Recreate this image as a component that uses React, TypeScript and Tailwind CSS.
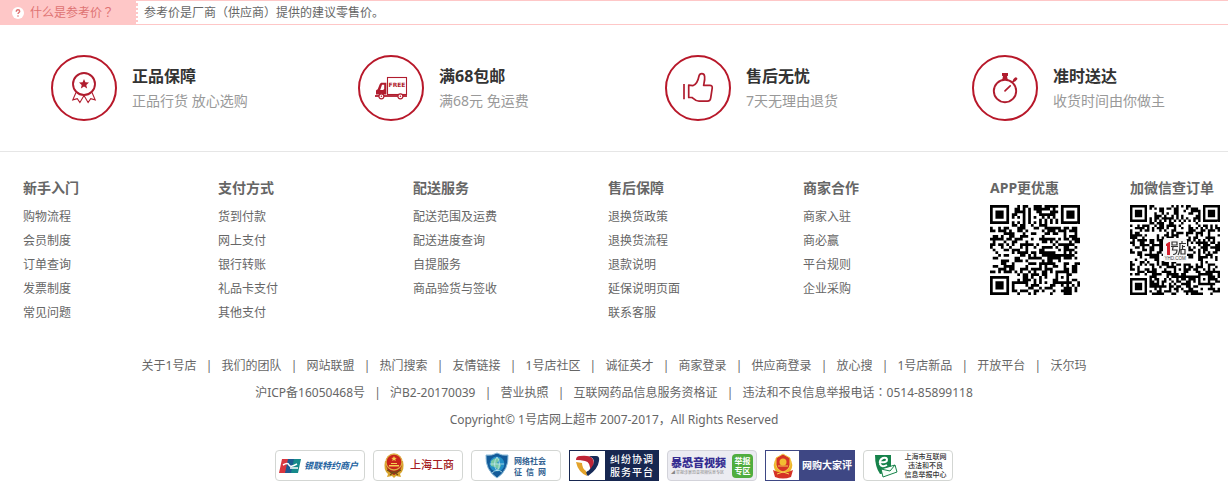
import React from "react";

const features = [
  { title: "正品保障", text: "正品行货 放心选购", icon: "medal" },
  { title: "满68包邮", text: "满68元 免运费", icon: "truck" },
  { title: "售后无忧", text: "7天无理由退货", icon: "thumb" },
  { title: "准时送达", text: "收货时间由你做主", icon: "watch" },
];

const columns = [
  { title: "新手入门", items: ["购物流程", "会员制度", "订单查询", "发票制度", "常见问题"] },
  { title: "支付方式", items: ["货到付款", "网上支付", "银行转账", "礼品卡支付", "其他支付"] },
  { title: "配送服务", items: ["配送范围及运费", "配送进度查询", "自提服务", "商品验货与签收"] },
  { title: "售后保障", items: ["退换货政策", "退换货流程", "退款说明", "延保说明页面", "联系客服"] },
  { title: "商家合作", items: ["商家入驻", "商必赢", "平台规则", "企业采购"] },
];

const siteLinks = [
  "关于1号店", "我们的团队", "网站联盟", "热门搜索", "友情链接", "1号店社区", "诚征英才",
  "商家登录", "供应商登录", "放心搜", "1号店新品", "开放平台", "沃尔玛",
];

const legalLinks = [
  "沪ICP备16050468号", "沪B2-20170039", "营业执照", "互联网药品信息服务资格证",
  "违法和不良信息举报电话：0514-85899118",
];

function FeatureIcon({ name }: { name: string }) {
  return (
    <svg viewBox="0 0 66 66" className="size-[66px] shrink-0" fill="none" stroke="#b01c2e" strokeWidth="1.7" aria-hidden="true">
      <circle cx="33" cy="33" r="32" stroke="#b8182a" strokeWidth="2" />
      {name === "medal" && (
        <g>
          <circle cx="33" cy="29" r="11" strokeWidth="1.9" />
          <path d="M33 24l1.4 3.3 3.6.3-2.7 2.4.8 3.5-3.1-1.9-3.1 1.9.8-3.5-2.7-2.4 3.6-.3z" fill="#b01c2e" stroke="none" />
          <path d="M25 37.5l-3.2 7.3 4.5-1.2 2.6 3.9 4.1-7 4.1 7 2.6-3.9 4.5 1.2-3.2-7.3" strokeWidth="1.1" />
        </g>
      )}
      {name === "truck" && (
        <g>
          <rect x="29.5" y="22.5" width="19" height="17" strokeWidth="1.1" />
          <path d="M28.400 27.700H24c-1.200 0-1.900.6-2.300 1.600l-2 5c-1.200.5-1.700 1-1.700 2V39.500H28.400z" fill="#b01c2e" stroke="none" />
          <path d="M26.200 29.700h-2.200l-1.800 5.200h3l1-1.200z" fill="#fff" stroke="none" />
          <path d="M17 41H49" strokeWidth="1.8" />
          <circle cx="23.4" cy="41.3" r="2.500" fill="#fff" strokeWidth="1.2" />
          <circle cx="42.4" cy="41.3" r="2.500" fill="#fff" strokeWidth="1.2" />
          <circle cx="23.4" cy="41.3" r=".8" fill="#b01c2e" stroke="none" />
          <circle cx="42.4" cy="41.3" r=".8" fill="#b01c2e" stroke="none" />
          <text x="39" y="32" textAnchor="middle" fill="#b01c2e" stroke="none" fontSize="6" fontWeight="700" fontFamily="DejaVu Sans, sans-serif">FREE</text>
        </g>
      )}
      {name === "thumb" && (
        <path d="M19 29V44.3M23.7 30.2V42.5H27c2 1.8 3.8 3.7 7 3.7h8.5c2.5 0 3-1.2 3.2-3.2l1.5-9.8c.3-2-.6-2.9-2.4-2.9h-6.2c.6-3 1.5-5.8 1-9-.6-3.5-4.9-3.3-5.6-.3-.8 4.2-2.2 8.5-6.2 9.7z" strokeLinejoin="round" />
      )}
      {name === "watch" && (
        <g>
          <circle cx="33" cy="36" r="11.2" strokeWidth="1.9" />
          <path d="M30 18h6v2.7l-1 .6.8 3.5h-5.6l.8-3.5-1-.6z" fill="#b01c2e" stroke="none" />
          <path d="M33 35.8l5.2-5M41 26.6l1.2-1.2" strokeLinecap="round" />
          <path d="M42.6 25l1.2-1.2" strokeWidth="3" strokeLinecap="round" />
        </g>
      )}
    </svg>
  );
}

function finderModule(x: number, y: number) {
  const ring = Math.max(Math.abs(x - 3), Math.abs(y - 3));
  return ring === 3 || ring <= 1;
}

function moduleIsDark(x: number, y: number, n: number, seed: number) {
  if (x < 8 && y < 8) return finderModule(x, y);
  if (x > n - 9 && y < 8) return finderModule(n - 1 - x, y);
  if (x < 8 && y > n - 9) return finderModule(x, n - 1 - y);
  const ring = Math.max(Math.abs(x - (n - 7)), Math.abs(y - (n - 7)));
  if (ring <= 2) return ring !== 1;
  if (x === 6) return y % 2 === 0;
  if (y === 6) return x % 2 === 0;
  let h = (x * 374761393 + y * 668265263 + seed * 69069) | 0;
  h = Math.imul(h ^ (h >>> 13), 1274126177);
  return ((h ^ (h >>> 16)) & 255) < 132;
}

function QrCode({ size, seed, label, logo = false }: { size: number; seed: number; label: string; logo?: boolean }) {
  let d = "";
  for (let y = 0; y < size; y++) {
    for (let x = 0; x < size; x++) {
      if (moduleIsDark(x, y, size, seed)) d += `M${x} ${y}h1v1h-1z`;
    }
  }
  return (
    <div className="relative size-[90px]">
      <svg viewBox={`0 0 ${size} ${size}`} className="size-full" role="img" aria-label={label}>
        <path d={d} fill="#000" />
      </svg>
      {logo && (
        <svg viewBox="0 0 24 24" className="absolute inset-0 m-auto size-[24px]" aria-hidden="true">
          <rect width="24" height="24" rx="3" fill="#f7f7f7" />
          <path d="M3 6l3-2h1v13H4V8H3z" fill="#d5202c" />
          <path d="M9 4h5v3H9zM8 8.5h7M10 9l-.5 3H14c0 3-1 4.500-4 4.500M19 3v2M16 5.500h7M17 6c0 5 0 8-2 11M19.500 7v4M19.500 8.500H22M18 11.500h4V16h-4z" fill="none" stroke="#333" strokeWidth="1.200" />
          <text x="12" y="22" textAnchor="middle" fontSize="4.500" fill="#444" fontFamily="Liberation Sans, sans-serif">YHD.COM</text>
        </svg>
      )}
    </div>
  );
}

function CenteredMark({ children }: { children: string }) {
  return <span lang="zh-TW" className="font-['Noto_Sans_CJK_TC',sans-serif]">{children}</span>;
}

function LinkText({ text }: { text: string }) {
  const [before, after] = text.split("：");
  if (after === undefined) return <>{text}</>;
  return <>{before}<CenteredMark>：</CenteredMark>{after}</>;
}

function LinkRow({ links }: { links: string[] }) {
  return (
    <div className="flex h-[27px] items-center justify-center whitespace-nowrap">
      {links.map((link, i) => (
        <React.Fragment key={link}>
          {i > 0 && <span className="w-[25px] text-center text-[#666]">|</span>}
          <a href="#" className="hover:underline"><LinkText text={link} /></a>
        </React.Fragment>
      ))}
    </div>
  );
}

function Emblem() {
  return (
    <svg viewBox="0 0 24 26" className="h-[26px] w-[24px] shrink-0" aria-hidden="true">
      <path d="M3 8Q1 17 6 21l-1 3 5-1 2 2 2-2 5 1-1-3q5-4 3-13z" fill="#d9a52d" />
      <path d="M4 9Q4 19 12 22 20 19 20 9z" fill="#ad2118" />
      <circle cx="12" cy="9" r="8" fill="#c9231b" stroke="#ddb044" strokeWidth="1.300" />
      <path d="M12 3l.8 1.800 2 .1-1.500 1.200.5 1.900-1.800-1-1.800 1 .5-1.900-1.500-1.200 2-.1zM7 12h10v1.500H7zM9 10h6v1H9z" fill="#f5cf51" />
      <path d="M5 17q7 5 14 0M8 22l4-3 4 3" fill="none" stroke="#705017" strokeWidth="1.300" />
    </svg>
  );
}

const badgeBase = "flex h-[31px] w-[90px] items-center overflow-hidden whitespace-nowrap border";

function Badges() {
  return (
    <div className="flex justify-center gap-2">
      <a href="#" className={`${badgeBase} rounded-[4px] border-[#d3d6d3] bg-white pl-[2px]`}>
        <svg viewBox="0 0 24 16" className="h-[16px] w-[24px] shrink-0" aria-hidden="true">
          <path d="M4 1h8L9 15H1z" fill="#d9363f" />
          <path d="M10 1h7l-3 14H7z" fill="#1d5b91" />
          <path d="M16 1h7l-3 14h-7z" fill="#168a8b" />
          <path d="M5 7q5-3 6 0t8-1M12 10h8" fill="none" stroke="#fff" strokeWidth="1.500" />
        </svg>
        <span className="pl-[2px] text-[9px] font-bold italic text-[#21619e]">银联特约商户</span>
      </a>
      <a href="#" className={`${badgeBase} rounded-[4px] border-[#d3d6d3] bg-white pl-2`}>
        <Emblem />
        <span className="pl-1 text-[11px] font-medium text-[#a51c23]">上海工商</span>
      </a>
      <a href="#" className={`${badgeBase} rounded-[4px] border-[#d3d6d3] bg-white pl-3`}>
        <svg viewBox="0 0 26 27" className="h-[27px] w-[26px] shrink-0" aria-hidden="true">
          <path d="M13 1q5 3 11 2 1 15-11 23Q1 18 2 3q6 1 11-2z" fill="#145b99" stroke="#8bbbd8" />
          <circle cx="13" cy="12" r="7.500" fill="#238fc6" />
          <path d="M7 9q5-5 9-2l-3 4 4 2-2 5-4-3-4-1z" fill="#78c8a5" />
          <path d="M6 12h14M13 5q-5 7 0 14 5-7 0-14M8 21q5-5 10-1" fill="none" stroke="#bee6ed" strokeWidth=".8" />
        </svg>
        <span className="flex flex-col pl-[4px] text-[8px] leading-[11px] font-bold text-[#315f91]">
          <span>网络社会</span>
          <span className="flex justify-between"><span>征</span><span>信</span><span>网</span></span>
        </span>
      </a>
      <a href="#" className={`${badgeBase} border-[#172750] bg-[#172750]`}>
        <svg viewBox="0 0 35 29" className="h-[29px] w-[35px] shrink-0" aria-hidden="true">
          <path d="M0 0h35v29H0z" fill="#fff" />
          <path d="M6 9q0-4 4-4 9-1 12 2 3 3 1 9l-3 5q1-10-5-11-4-1-9-1z" fill="#bf2536" />
          <path d="M19 5h7q4 0 3 5-1 8-11 15l-3-3q8-5 9-11 0-4-5-6z" fill="#182b58" />
          <path d="M6 11l6 1q0 5 4 8l1 5q-9-4-11-14z" fill="#e3a32b" />
          <path d="M6 10q11-1 12 10" fill="none" stroke="#fff" strokeWidth="1" />
        </svg>
        <span className="flex flex-col pl-[5px] text-[10px] leading-[13px] font-medium text-white">
          {["纠纷协调", "服务平台"].map((line) => (
            <span key={line} className="flex gap-px">
              {Array.from(line).map((ch) => <span key={ch}>{ch}</span>)}
            </span>
          ))}
        </span>
      </a>
      <a href="#" className={`${badgeBase} justify-between rounded-[4px] border-[#d3d3da] bg-[#ececf2] px-[3px]`}>
        <span className="flex flex-col">
          <span className="text-[11px] leading-[15px] font-black text-[#352c91]">暴恐音视频</span>
          <span className="text-[4px] leading-[6px] text-[#888]">◢ 举报涉暴恐音视频信息专区</span>
        </span>
        <span className="flex h-[24px] w-[21px] flex-col items-center justify-center rounded-[4px] bg-[#50ad3f] text-[8px] leading-[10px] font-bold text-white">
          <span>举报</span><span>专区</span>
        </span>
      </a>
      <a href="#" className={`${badgeBase} border-[#3e4784] bg-[#3e4784]`}>
        <span className="flex h-full w-[33px] shrink-0 items-center justify-center bg-white">
          <svg viewBox="0 0 26 26" className="size-[26px]" aria-hidden="true">
            <path d="M7 4q-6 8-1 15h14q5-7-1-15z" fill="#edb52c" />
            <path d="M13 1l7 4v7q-1 5-7 7-6-2-7-7V5z" fill="#d53326" stroke="#f6cf4b" />
            <circle cx="13" cy="9" r="3.500" fill="#f2bd32" />
            <path d="M3 17q10 5 20 0l-2 7q-8 3-16 0z" fill="#d53326" />
            <path d="M8 13h10M7 21l6-2 6 2" stroke="#f6cf4b" fill="none" />
          </svg>
        </span>
        <span className="pl-[3px] text-[10px] font-bold text-white">网购大家评</span>
      </a>
      <a href="#" className={`${badgeBase} rounded-[4px] border-[#d3d6d3] bg-white pl-[10px]`}>
        <svg viewBox="0 0 25 25" className="size-[25px] shrink-0" aria-hidden="true">
          <path d="M1 2h16v16q-6 3-11 3Q1 14 1 2z" fill="#16824a" />
          <path d="M5 9q8 1 8-2 0-3-4-2-4 2-3 6 2 4 7 1" fill="none" stroke="#fff" strokeWidth="2" />
          <path d="M7 16l14-4 2 7-14 5z" fill="#f7fff9" stroke="#16824a" />
          <path d="M7 16l9 2 5-6" fill="none" stroke="#16824a" />
        </svg>
        <span className="flex grow flex-col items-center text-[7px] leading-[9px] font-medium text-[#333]">
          <span>上海市互联网</span><span>违法和不良</span><span>信息举报中心</span>
        </span>
      </a>
    </div>
  );
}

export default function App() {
  return (
    <main className="bg-white pb-5 font-['Noto_Sans','Noto_Sans_CJK_SC',sans-serif] text-[12px] text-[#666]" lang="zh-CN">
      <div className="flex h-[25px] border-y border-[#fec7c7]">
        <div className="flex w-[138px] shrink-0 items-center gap-[6px] border-r-2 border-dotted border-white bg-[#fec7c7] pl-3 text-[#de7373]">
          <svg viewBox="0 0 12 12" className="size-[12px]" aria-hidden="true">
            <circle cx="6" cy="6" r="6" fill="#fff" />
            <path d="M4.300 4.700q0-1.900 1.700-1.900t1.700 1.500c0 1.200-1.700 1.300-1.700 2.700" fill="none" stroke="#de7373" strokeWidth="1.400" />
            <circle cx="6" cy="9" r=".8" fill="#de7373" />
          </svg>
          <span>什么是参考价<CenteredMark>？</CenteredMark></span>
        </div>
        <p className="flex items-center pl-[6px]">参考价是厂商（供应商）提供的建议零售价。</p>
      </div>

      <section className="grid grid-cols-4 border-b border-[#e6e6e6] pt-[30px] pb-[30px]">
        {features.map((f) => (
          <div key={f.title} className="flex items-center gap-[15px] pl-[51px]">
            <FeatureIcon name={f.icon} />
            <div>
              <h3 className="text-[16px] leading-[26px] font-bold text-[#333]">{f.title}</h3>
              <p className="text-[14px] leading-6 text-[#999]">{f.text}</p>
            </div>
          </div>
        ))}
      </section>

      <footer>
        <div className="grid grid-cols-[195fr_195fr_195fr_195fr_187fr_140fr_98fr] pt-6 pl-[23px]">
          {columns.map((c) => (
            <div key={c.title}>
              <h4 className="mb-[5px] text-[14px] leading-6 font-bold">{c.title}</h4>
              <ul>
                {c.items.map((item) => (
                  <li key={item} className="leading-6"><a href="#" className="hover:underline">{item}</a></li>
                ))}
              </ul>
            </div>
          ))}
          <div className="whitespace-nowrap">
            <h4 className="mb-[5px] text-[14px] leading-6 font-bold">APP更优惠</h4>
            <QrCode size={33} seed={17} label="APP更优惠" />
          </div>
          <div className="whitespace-nowrap">
            <h4 className="mb-[5px] text-[14px] leading-6 font-bold">加微信查订单</h4>
            <QrCode size={37} seed={91} label="加微信查订单" logo />
          </div>
        </div>

        <div className="pt-[27px] pb-[17px]">
          <LinkRow links={siteLinks} />
          <LinkRow links={legalLinks} />
          <p className="flex h-[27px] items-center justify-center">Copyright© 1号店网上超市 2007-2017，All Rights Reserved</p>
        </div>
        <Badges />
      </footer>
    </main>
  );
}
